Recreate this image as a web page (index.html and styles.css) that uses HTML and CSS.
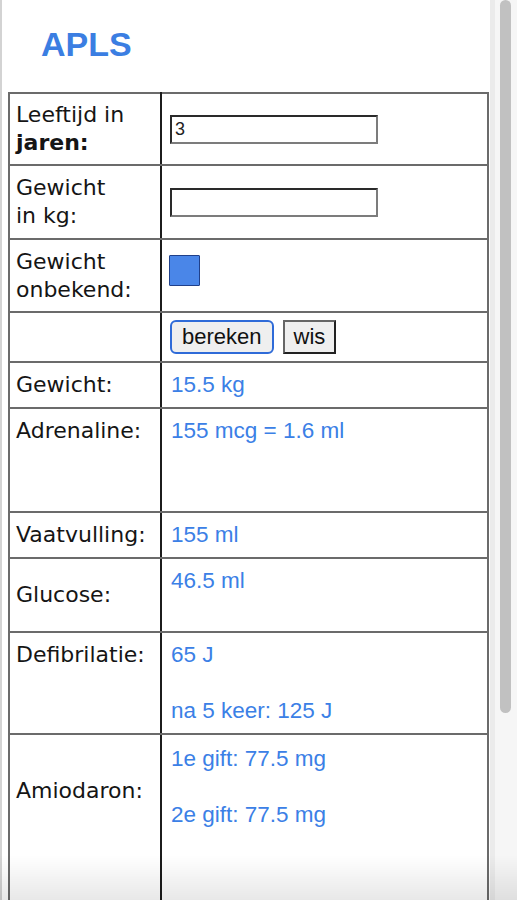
FILE: index.html
```html
<!DOCTYPE html>
<html lang="nl">
<head>
<meta charset="utf-8">
<title>APLS</title>
<link rel="stylesheet" href="styles.css">
</head>
<body>
<div class="screen">
  <main class="page">
    <h1 class="title">APLS</h1>
    <table class="calc">
      <colgroup><col class="col-label"><col></colgroup>
      <tr class="row-tight">
        <td class="label">Leeftijd in<br><b>jaren:</b></td>
        <td class="value"><input class="field" type="text" value="3"></td>
      </tr>
      <tr>
        <td class="label">Gewicht<br>in kg:</td>
        <td class="value"><input class="field" type="text" value=""></td>
      </tr>
      <tr class="row-tight-bottom">
        <td class="label">Gewicht<br>onbekend:</td>
        <td class="value"><input class="check" type="checkbox" checked></td>
      </tr>
      <tr class="row-tight">
        <td class="label"></td>
        <td class="value">
          <div class="actions">
            <button class="btn btn-primary" type="button">bereken</button>
            <button class="btn btn-plain" type="button">wis</button>
          </div>
        </td>
      </tr>
      <tr>
        <td class="label">Gewicht:</td>
        <td class="value">15.5 kg</td>
      </tr>
      <tr class="row-top row-loose">
        <td class="label">Adrenaline:</td>
        <td class="value">155 mcg = 1.6 ml<br><br><br></td>
      </tr>
      <tr>
        <td class="label">Vaatvulling:</td>
        <td class="value">155 ml</td>
      </tr>
      <tr>
        <td class="label">Glucose:</td>
        <td class="value value-top">46.5 ml<br><br></td>
      </tr>
      <tr class="row-top">
        <td class="label">Defibrilatie:</td>
        <td class="value">65 J<br><br>na 5 keer: 125 J</td>
      </tr>
      <tr class="row-top">
        <td class="label label-low">Amiodaron:</td>
        <td class="value value-first">1e gift: 77.5 mg<br><br>2e gift: 77.5 mg<br><br><br><br></td>
      </tr>
    </table>
  </main>
  <div class="scrollbar"><div class="thumb"></div></div>
</div>
<div class="fade"></div>
</body>
</html>
```

FILE: styles.css
```css
html, body {
  margin: 0;
  height: 100%;
  overflow: hidden;
  background: #ffffff;
}

.screen {
  display: flex;
  height: 900px;
}

.page {
  flex: 1;
  min-width: 0;
  border-left: 2px solid #d3d3d3;
  padding-left: 6px;
  overflow: hidden;
}

.title {
  margin: 24px 0 28px 33px;
  font: bold 34px/40px "Liberation Sans", Arial, sans-serif;
  color: #3b7ee2;
}

.calc {
  border-collapse: collapse;
  width: 481px;
  border: 2px solid #5e5e5e;
  font-family: "DejaVu Sans", sans-serif;
  font-size: 22px;
  line-height: 28px;
}

.col-label {
  width: 152px;
}

.calc td {
  border: 2px solid #6b6b6b;
  padding: 8px;
  vertical-align: middle;
}

.calc .row-tight td {
  padding-top: 7px;
  padding-bottom: 7px;
}

.calc .row-tight-bottom td {
  padding-bottom: 7px;
}

.calc .row-loose td {
  padding-bottom: 10px;
}

.calc td.label {
  padding-left: 6px;
  color: #151515;
  border-right-color: #1c1c1c;
}

.calc td.value {
  padding-left: 9px;
  color: #3b80e6;
  font-family: "Liberation Sans", Arial, sans-serif;
  font-size: 22.5px;
}

.row-top td,
.calc td.value-top {
  vertical-align: top;
}

.calc td.label-low {
  padding-top: 42px;
}

.calc td.value-first {
  padding-top: 10px;
}

.field {
  display: block;
  box-sizing: border-box;
  width: 208px;
  height: 29px;
  margin: 0 0 0 -1px;
  padding: 0 3px;
  border-style: solid;
  border-width: 2px;
  border-color: #2a2a2a #7c7c7c #7c7c7c #2a2a2a;
  background: #fff;
  font: 18px "Liberation Sans", Arial, sans-serif;
  color: #222;
}

.check {
  appearance: none;
  -webkit-appearance: none;
  display: block;
  box-sizing: border-box;
  width: 31px;
  height: 31px;
  margin: 0 0 11px -2px;
  background: #4a86e8;
  border: 1.5px solid #20408a;
  border-radius: 1px;
}

.actions {
  display: flex;
  gap: 9px;
  margin-left: -1px;
}

.btn {
  box-sizing: border-box;
  height: 34px;
  margin: 0;
  padding: 2px 10px;
  font: 22px/26px "Liberation Sans", Arial, sans-serif;
  color: #111;
  background: #efefef;
  border: 2px solid #444;
}

.btn-primary {
  border-color: #2f6bd8;
  border-radius: 6px;
}

.btn-plain {
  padding: 2px 9px;
  border-color: #666 #222 #222 #666;
  border-radius: 0;
}

.scrollbar {
  flex: none;
  box-sizing: border-box;
  width: 27px;
  background: #f6f6f6;
  border-left: 5px solid #ebebeb;
  padding-left: 5px;
}

.thumb {
  width: 11px;
  height: 713px;
  background: #c1c1c1;
  border-radius: 6px;
}

.fade {
  position: fixed;
  left: 0;
  right: 0;
  bottom: 0;
  height: 45px;
  background: linear-gradient(to bottom, rgba(0, 0, 0, 0), rgba(0, 0, 0, 0.09));
  pointer-events: none;
}
```
